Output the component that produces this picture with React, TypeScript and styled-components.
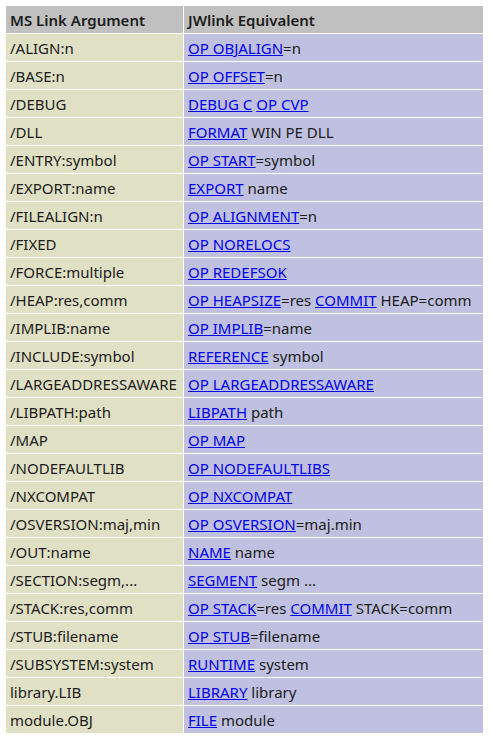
import React from 'react'
import styled, { createGlobalStyle } from 'styled-components'

const GlobalStyle = createGlobalStyle`
  body {
    margin: 0;
    background: #fff;
    font-family: "Noto Sans", "Open Sans", sans-serif;
    font-size: 15px;
    color: #1c1c1c;
  }
`

const Table = styled.table`
  margin: 5px;
  width: 479px;
  border-spacing: 1px;
  border-collapse: separate;
`

const HeadCell = styled.th<{ $first?: boolean }>`
  background: #c0c0c0;
  font-weight: 600;
  text-align: left;
  height: 27px;
  padding: 0 4px;
  line-height: 20px;
  vertical-align: middle;
  width: ${p => (p.$first ? '169px' : 'auto')};
`

const Cell = styled.td<{ $alt?: boolean }>`
  background: ${p => (p.$alt ? '#c0c0e0' : '#e0e0c4')};
  height: 27px;
  padding: 0 4px;
  line-height: 20px;
  vertical-align: middle;
  white-space: nowrap;
`

const Link = styled.a`
  color: #0000ee;
  text-decoration: underline;
`

// second column: [link] marks a link, rest is plain text
const rows: [string, string][] = [
  ['/ALIGN:n', '[OP OBJALIGN]=n'],
  ['/BASE:n', '[OP OFFSET]=n'],
  ['/DEBUG', '[DEBUG C] [OP CVP]'],
  ['/DLL', '[FORMAT] WIN PE DLL'],
  ['/ENTRY:symbol', '[OP START]=symbol'],
  ['/EXPORT:name', '[EXPORT] name'],
  ['/FILEALIGN:n', '[OP ALIGNMENT]=n'],
  ['/FIXED', '[OP NORELOCS]'],
  ['/FORCE:multiple', '[OP REDEFSOK]'],
  ['/HEAP:res,comm', '[OP HEAPSIZE]=res [COMMIT] HEAP=comm'],
  ['/IMPLIB:name', '[OP IMPLIB]=name'],
  ['/INCLUDE:symbol', '[REFERENCE] symbol'],
  ['/LARGEADDRESSAWARE', '[OP LARGEADDRESSAWARE]'],
  ['/LIBPATH:path', '[LIBPATH] path'],
  ['/MAP', '[OP MAP]'],
  ['/NODEFAULTLIB', '[OP NODEFAULTLIBS]'],
  ['/NXCOMPAT', '[OP NXCOMPAT]'],
  ['/OSVERSION:maj,min', '[OP OSVERSION]=maj.min'],
  ['/OUT:name', '[NAME] name'],
  ['/SECTION:segm,...', '[SEGMENT] segm ...'],
  ['/STACK:res,comm', '[OP STACK]=res [COMMIT] STACK=comm'],
  ['/STUB:filename', '[OP STUB]=filename'],
  ['/SUBSYSTEM:system', '[RUNTIME] system'],
  ['library.LIB', '[LIBRARY] library'],
  ['module.OBJ', '[FILE] module'],
]

const renderEquivalent = (text: string) =>
  text.split(/(\[[^\]]+\])/).filter(Boolean).map((part, i) =>
    part.startsWith('[')
      ? <Link key={i} href="#">{part.slice(1, -1)}</Link>
      : <React.Fragment key={i}>{part}</React.Fragment>
  )

const App = () => {
  return (
    <>
      <GlobalStyle />
      <Table>
        <thead>
          <tr>
            <HeadCell $first>MS Link Argument</HeadCell>
            <HeadCell>JWlink Equivalent</HeadCell>
          </tr>
        </thead>
        <tbody>
          {rows.map(([ms, jw]) => (
            <tr key={ms}>
              <Cell>{ms}</Cell>
              <Cell $alt>{renderEquivalent(jw)}</Cell>
            </tr>
          ))}
        </tbody>
      </Table>
    </>
  )
}

export default App
